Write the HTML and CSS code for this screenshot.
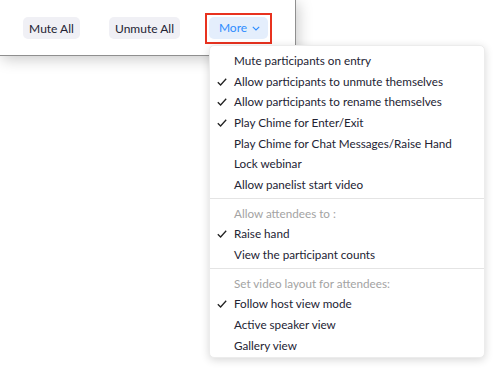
FILE: index.html
```html
<!DOCTYPE html>
<html>
<head>
<meta charset="utf-8">
<link rel="stylesheet" href="styles.css">
</head>
<body>
<div class="stage">
  <div class="panel">
    <button class="btn btn-mute">Mute All</button>
    <button class="btn btn-unmute">Unmute All</button>
    <div class="highlight">
      <button class="btn btn-more">More
        <svg class="chev" width="8" height="5" viewBox="0 0 8 5"><path d="M0.8 0.8 L4 4 L7.2 0.8" fill="none" stroke="#2d8cff" stroke-width="1.1"/></svg>
      </button>
    </div>
  </div>
  <div class="menu">
    <div class="group">
      <div class="item">Mute participants on entry</div>
      <div class="item checked"><svg class="check" width="10" height="8" viewBox="0 0 10 8"><path d="M0.8 4.2 L3.6 7 L9.2 0.8" fill="none" stroke="#222" stroke-width="1.3"/></svg>Allow participants to unmute themselves</div>
      <div class="item checked"><svg class="check" width="10" height="8" viewBox="0 0 10 8"><path d="M0.8 4.2 L3.6 7 L9.2 0.8" fill="none" stroke="#222" stroke-width="1.3"/></svg>Allow participants to rename themselves</div>
      <div class="item checked"><svg class="check" width="10" height="8" viewBox="0 0 10 8"><path d="M0.8 4.2 L3.6 7 L9.2 0.8" fill="none" stroke="#222" stroke-width="1.3"/></svg>Play Chime for Enter/Exit</div>
      <div class="item">Play Chime for Chat Messages/Raise Hand</div>
      <div class="item">Lock webinar</div>
      <div class="item">Allow panelist start video</div>
    </div>
    <div class="group">
      <div class="item header">Allow attendees to<span class="colon">:</span></div>
      <div class="item checked"><svg class="check" width="10" height="8" viewBox="0 0 10 8"><path d="M0.8 4.2 L3.6 7 L9.2 0.8" fill="none" stroke="#222" stroke-width="1.3"/></svg>Raise hand</div>
      <div class="item">View the participant counts</div>
    </div>
    <div class="group last">
      <div class="item header">Set video layout for attendees:</div>
      <div class="item checked"><svg class="check" width="10" height="8" viewBox="0 0 10 8"><path d="M0.8 4.2 L3.6 7 L9.2 0.8" fill="none" stroke="#222" stroke-width="1.3"/></svg>Follow host view mode</div>
      <div class="item">Active speaker view</div>
      <div class="item">Gallery view</div>
    </div>
  </div>
</div>
</body>
</html>
```
FILE: styles.css
```css
* { box-sizing: border-box; }
html, body { margin: 0; padding: 0; background: #fff; }
body { font-family: Lato, "Open Sans", sans-serif; font-size: 11.7px; color: #232333; }
.stage { position: relative; width: 500px; height: 372px; overflow: hidden; }
.panel {
  width: 296px; height: 56px;
  background: #fff;
  border-right: 1px solid #8f8f8f;
  border-bottom: 1px solid #8f8f8f;
  box-shadow: 2px 3px 14px rgba(0,0,0,0.22);
  display: flex; align-items: center;
  padding: 1px 0 0 23px;
}
.btn {
  font: inherit; font-size: 12px; color: #232333;
  border: none; background: #f0f0f5;
  height: 22px; border-radius: 5px;
  padding: 0; cursor: pointer;
}
.btn-mute { width: 57px; margin-right: 29px; }
.btn-unmute { width: 71px; margin-right: 25px; }
.highlight { border: 2px solid #e8321f; padding: 2px; height: 31px; }
.btn-more {
  width: 59px; background: #e4eefc; color: #2d8cff;
  display: flex; align-items: center; justify-content: center; gap: 5px;
  padding-left: 2px;
}
.chev { display: block; margin-top: 1px; }
.menu {
  position: absolute; left: 209px; top: 45px;
  width: 276px; height: 313px;
  background: #fff; border-radius: 5px;
  border: 1px solid #ececec;
  box-shadow: 0 2px 9px rgba(0,0,0,0.16);
  padding-top: 4px;
}
.group { border-bottom: 1px solid #e4e4e4; padding: 0 0 3px; margin-bottom: 4px; }
.group.last { border-bottom: none; margin: 0; padding: 0; }
.item {
  height: 20.67px; line-height: 20.67px;
  padding-left: 24px; position: relative; white-space: nowrap;
}
.item.header { color: #a3a3a3; }
.colon { margin-left: 3px; }
.check { position: absolute; left: 7px; top: 7px; }
```
